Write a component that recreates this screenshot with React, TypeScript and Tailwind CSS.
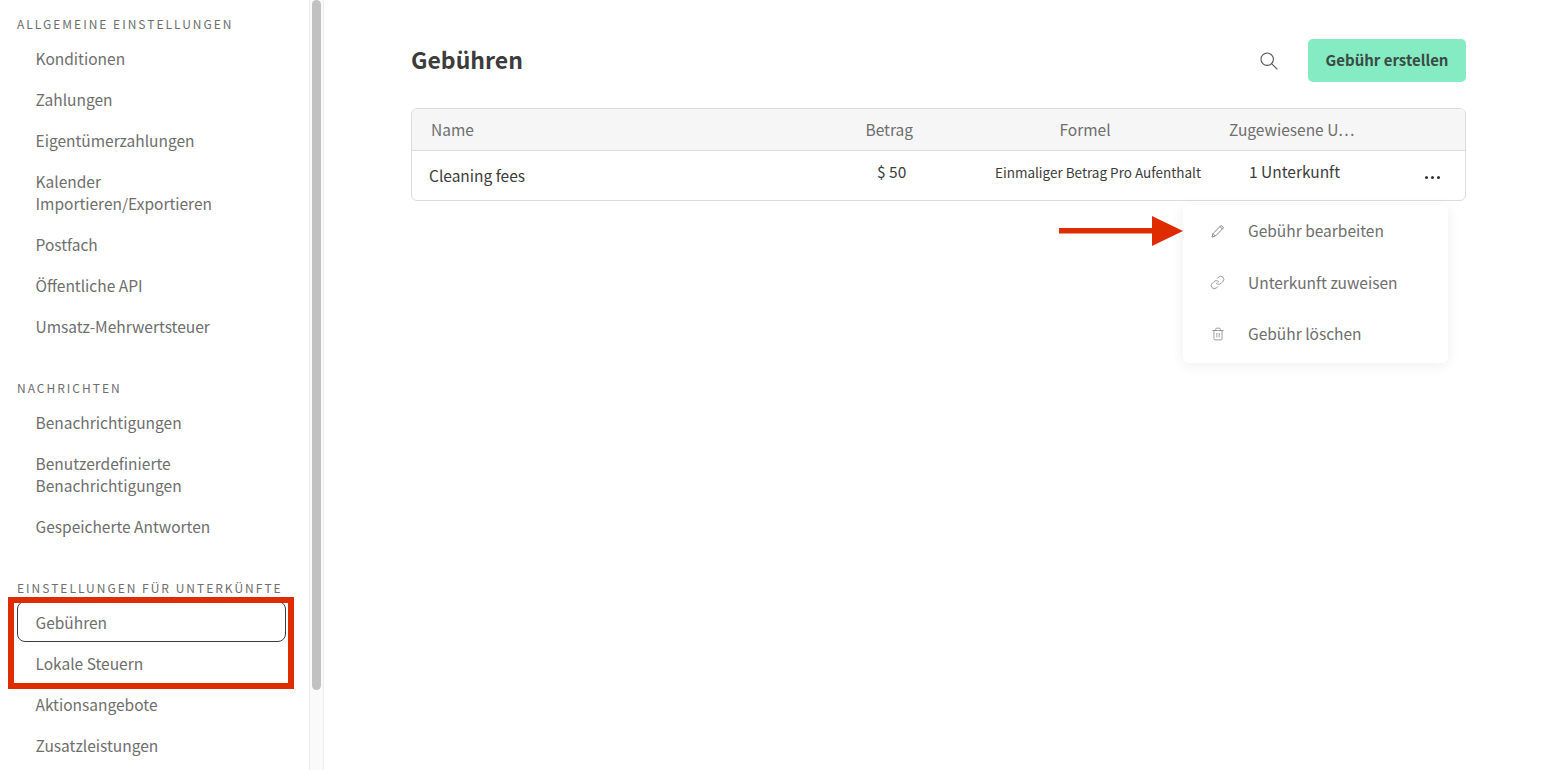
import { Link, Trash2 } from "lucide-react";

const font = "font-['Noto_Sans_CJK_SC','Source_Sans_Pro','Noto_Sans',sans-serif]";

function Item({ children, active }: { children: React.ReactNode; active?: boolean }) {
  return (
    <div
      className={
        "w-[269px] border rounded-[8px] pl-[17.5px] pr-[10px] py-[8.5px] text-[15.5px] leading-[22px] text-[#6e6e6e] " +
        (active ? "border-[#3c3c3c]" : "border-transparent")
      }
    >
      {children}
    </div>
  );
}

function Heading({ children, className }: { children: React.ReactNode; className?: string }) {
  return (
    <div className={"text-[12px] leading-[18px] tracking-[2px] text-[#6e6e6e] whitespace-nowrap " + (className ?? "")}>
      {children}
    </div>
  );
}

function MenuRow({ icon, label }: { icon: React.ReactNode; label: string }) {
  return (
    <div className="h-[51.5px] flex items-center pl-[27px] text-[15.5px] text-[#6e6e6e]">
      <span className="w-[38px] flex items-center">{icon}</span>
      {label}
    </div>
  );
}

export default function App() {
  return (
    <div className={"relative w-[1548px] h-[770px] overflow-hidden bg-white flex " + font}>
      <aside className="w-[309px] h-full pl-[17px] pt-[15px] shrink-0 overflow-hidden">
        <Heading>ALLGEMEINE EINSTELLUNGEN</Heading>
        <div className="mt-[4px]">
          <Item>Konditionen</Item>
          <Item>Zahlungen</Item>
          <Item>Eigentümerzahlungen</Item>
          <Item>
            Kalender
            <br />
            Importieren/Exportieren
          </Item>
          <Item>Postfach</Item>
          <Item>Öffentliche API</Item>
          <Item>Umsatz-Mehrwertsteuer</Item>
        </div>
        <Heading className="mt-[33px]">NACHRICHTEN</Heading>
        <div className="mt-[4px]">
          <Item>Benachrichtigungen</Item>
          <Item>
            Benutzerdefinierte
            <br />
            Benachrichtigungen
          </Item>
          <Item>Gespeicherte Antworten</Item>
        </div>
        <Heading className="mt-[33px]">EINSTELLUNGEN FÜR UNTERKÜNFTE</Heading>
        <div className="mt-[4px]">
          <Item active>Gebühren</Item>
          <Item>Lokale Steuern</Item>
          <Item>Aktionsangebote</Item>
          <Item>Zusatzleistungen</Item>
        </div>
      </aside>

      <div className="w-[15px] h-full shrink-0 border-x border-[#ececec] bg-[#fafafa] px-[2px]">
        <div className="h-[690px] w-[9px] rounded-[5px] bg-[#c1c1c1]" />
      </div>

      <main className="flex-1 pl-[87px] pr-[82px] pt-[39px]">
        <div className="flex items-center justify-between h-[43px]">
          <h1 className="text-[23px] font-semibold text-[#3c3c3c] -mt-[3px]">Gebühren</h1>
          <div className="flex items-center">
            <svg width="18" height="18" viewBox="0 0 18 18" fill="none" stroke="#555" strokeWidth="1.1" className="mr-[30px]">
              <circle cx="7.2" cy="7.2" r="6.2" />
              <path d="M11.8 11.8 L17.4 17.4" />
            </svg>
            <button className="w-[158px] h-[43px] rounded-[5px] bg-[#85ebc3] text-[15px] font-semibold text-[#3c4a45]">
              Gebühr erstellen
            </button>
          </div>
        </div>

        <div className="mt-[26px] border border-[#dcdcdc] rounded-[6px] overflow-hidden">
          <div className="flex items-center h-[42px] bg-[#f6f6f6] border-b border-[#dcdcdc] text-[15.5px] text-[#6e6e6e]">
            <span className="w-[453.5px] pl-[19px]">Name</span>
            <span className="w-[70px]">Betrag</span>
            <span className="w-[293.5px] pl-[124px]">Formel</span>
            <span>Zugewiesene U…</span>
          </div>
          <div className="flex items-center h-[49px] text-[#3c3c3c]">
            <span className="w-[465px] pl-[17px] text-[15.5px]">Cleaning fees</span>
            <span className="w-[118px] text-[15.5px] -mt-[7px]">$ 50</span>
            <span className="w-[254px] text-[13.5px] -mt-[7px]">Einmaliger Betrag Pro Aufenthalt</span>
            <span className="w-[176px] text-[15.5px] -mt-[7px]">1 Unterkunft</span>
            <span className="flex gap-[3px] mt-[3px]">
              <i className="w-[3px] h-[3px] rounded-full bg-[#333]" />
              <i className="w-[3px] h-[3px] rounded-full bg-[#333]" />
              <i className="w-[3px] h-[3px] rounded-full bg-[#333]" />
            </span>
          </div>
        </div>
      </main>

      {/* dropdown menu */}
      <div className="absolute left-[1183px] top-[205px] w-[265px] h-[158px] rounded-[6px] bg-white shadow-[0_2px_14px_rgba(0,0,0,0.07)]">
        <MenuRow
          icon={
            <svg width="14" height="14" viewBox="0 0 14 14" fill="none" stroke="#777" strokeWidth="0.9" strokeLinejoin="round" className="ml-[1px]">
              <path d="M1 13 L2 9.6 L10.2 1.4 L12.6 3.8 L4.4 12 Z M9 2.6 L11.4 5 M2 9.6 L4.4 12" />
            </svg>
          }
          label="Gebühr bearbeiten"
        />
        <MenuRow icon={<Link className="w-[15px] h-[15px] text-[#777]" strokeWidth={1.2} />} label="Unterkunft zuweisen" />
        <MenuRow icon={<Trash2 className="w-[14px] h-[14px] text-[#777] ml-[1px]" strokeWidth={1.2} />} label="Gebühr löschen" />
      </div>

      {/* annotations */}
      <div className="absolute left-[8px] top-[597px] w-[286px] h-[92px] border-[6px] border-[#de2c00]" />
      <svg className="absolute left-[1059px] top-[215px]" width="125" height="32" viewBox="0 0 125 32">
        <rect x="0" y="13" width="95" height="5.5" fill="#de2c00" />
        <polygon points="93,1 124,16 93,31" fill="#de2c00" />
      </svg>
    </div>
  );
}
